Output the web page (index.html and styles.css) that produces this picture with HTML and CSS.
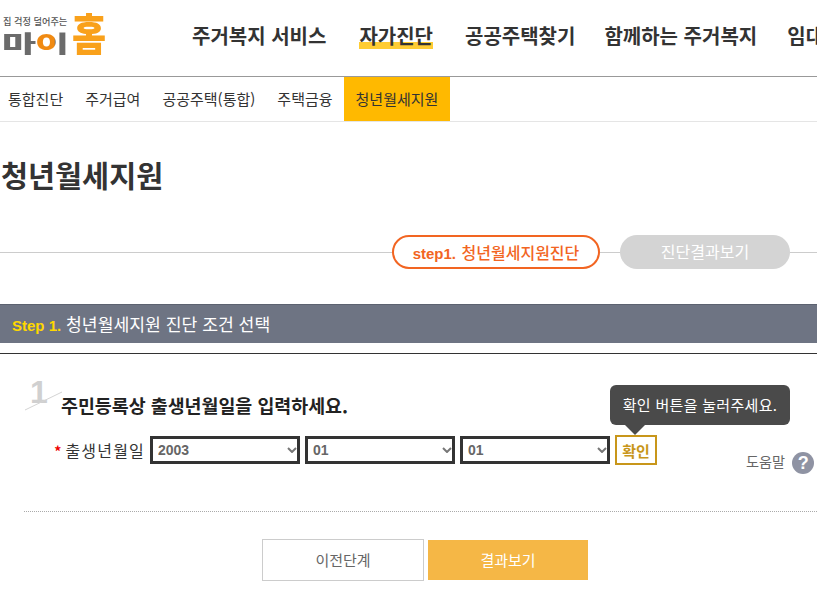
FILE: index.html
```html
<!DOCTYPE html>
<html lang="ko">
<head>
<meta charset="utf-8">
<title>청년월세지원</title>
<link rel="stylesheet" href="styles.css">
</head>
<body>
<header class="top">
  <a class="logo">
    <span class="logo-sub">집 걱정 덜어주는</span>
    <span class="logo-main">마<span class="logo-i">이</span></span>
    <span class="logo-home">홈</span>
  </a>
  <nav class="gnb">
    <a>주거복지 서비스</a>
    <a class="on">자가진단</a>
    <a>공공주택찾기</a>
    <a>함께하는 주거복지</a>
    <a>임대</a>
  </nav>
</header>
<nav class="lnb">
  <a>통합진단</a>
  <a>주거급여</a>
  <a>공공주택(통합)</a>
  <a>주택금융</a>
  <a class="on">청년월세지원</a>
</nav>
<h1 class="title">청년월세지원</h1>
<div class="steps">
  <span class="step current"><b>step1.</b> 청년월세지원진단</span>
  <span class="step next">진단결과보기</span>
</div>
<h2 class="bar"><em>Step 1.</em> 청년월세지원 진단 조건 선택</h2>
<div class="rule"></div>
<section class="form">
  <div class="q">
    <span class="num">1</span>
    <svg class="slash" width="40" height="20" viewBox="0 0 40 20"><line x1="1" y1="19" x2="38" y2="1" stroke="#d4d4d4" stroke-width="1"/></svg>
    <h3>주민등록상 출생년월일을 입력하세요.</h3>
  </div>
  <div class="row">
    <label><i>*</i>출생년월일</label>
    <select><option>2003</option></select>
    <select><option>01</option></select>
    <select><option>01</option></select>
    <div class="confirm-wrap">
      <button class="confirm">확인</button>
      <div class="tip">확인 버튼을 눌러주세요.</div>
    </div>
    <div class="help">도움말 <span class="qmark">?</span></div>
  </div>
  <div class="dots"></div>
  <div class="btns">
    <a class="btn prev">이전단계</a>
    <a class="btn result">결과보기</a>
  </div>
</section>
</body>
</html>
```
FILE: styles.css
```css
* { box-sizing: border-box; }
html, body { margin: 0; padding: 0; height: 606px; overflow: hidden; background: #fff; }
body { width: 817px; font-family: "Noto Sans CJK KR", "Liberation Sans", sans-serif; color: #333; }
h1, h2, h3 { margin: 0; }

.top { height: 77px; border-bottom: 1px solid #999; display: flex; overflow: hidden; }
.logo { width: 192px; flex: none; position: relative; display: block; }
.logo-sub { position: absolute; left: 3px; top: 15px; font-size: 9.2px; line-height: 12px; color: #555; white-space: nowrap; font-weight: 500; }
.logo-main { position: absolute; left: 2px; top: 20px; font-size: 35px; line-height: 44px; font-weight: 900; color: #6b6b6b; letter-spacing: -1px; white-space: nowrap; transform: scale(1.06, 0.66); transform-origin: 0 50%; }
.logo-i { background: linear-gradient(90deg, #f08a12 62%, #6b6b6b 62%); -webkit-background-clip: text; background-clip: text; color: transparent; }
.logo-home { position: absolute; left: 71px; top: 3px; font-size: 39px; line-height: 56px; font-weight: 900; color: #f9a11b; transform: scale(0.95, 1.15); transform-origin: 50% 50%; }
.gnb { display: flex; gap: 31px; padding-top: 21px; white-space: nowrap; font-size: 20px; line-height: 30px; font-weight: 700; color: #333; }
.gnb a { display: block; height: 30px; }
.gnb .on { margin: 0 1px 0 2px; background: linear-gradient(#ffcc33, #ffcc33) 0 21px / 100% 7px no-repeat; }
.gnb .on + a { margin-right: -2px; }
.gnb .on + a + a { margin-right: -1px; }

.lnb { height: 45px; border-bottom: 1px solid #e5e5e5; display: flex; padding-left: 8px; font-size: 15px; line-height: 44px; color: #333; gap: 22px; }
.lnb .on { background: #ffb900; margin-left: -11px; padding: 0 12px; }

.title { font-size: 29.4px; line-height: 40px; font-weight: 700; margin-top: 32px; color: #333; padding-left: 1px; }

.steps { margin-top: 41px; height: 34px; display: flex; gap: 20px; padding-left: 392px; position: relative;
  background: linear-gradient(#ccc, #ccc) 0 17px / 100% 1px no-repeat; }
.step { height: 34px; border-radius: 17px; font-size: 16px; line-height: 30px; text-align: center; }
.step.current { width: 208px; border: 2px solid #f26522; background: #fff; color: #f26522; font-weight: 500; }
.step.current b { font-family: "Liberation Sans", sans-serif; font-weight: 700; font-size: 15px; margin-right: 1px; }
.step.next { width: 170px; background: #d4d4d4; color: #fff; line-height: 33px; }

.bar { margin-top: 35px; height: 39px; background: #6e7483; border-top: 1px solid #5c6270; color: #fff; font-size: 17.2px; font-weight: 400; line-height: 37px; padding-left: 12px; }
.bar em { font-family: "Liberation Sans", sans-serif; font-style: normal; font-weight: 700; font-size: 15px; color: #ffd800; }
.rule { height: 1px; background: #333; margin-top: 10px; }

.form { padding: 0 0 0 24px; }
.q { height: 64px; position: relative; padding: 38px 0 0 38px; }
.q h3 { font-size: 18.4px; line-height: 26px; font-weight: 700; color: #222; margin-left: -1px; }
.num { position: absolute; left: 6px; top: 20px; font-family: "Liberation Sans", sans-serif; font-weight: 700; font-size: 32px; line-height: 36px; color: #d0d0d0; }
.slash { position: absolute; left: 0; top: 37px; }

.row { display: flex; align-items: center; gap: 5px; height: 30px; margin-top: 17px; position: relative; }
.row label { width: 121px; text-align: right; font-size: 16px; letter-spacing: 1.2px; color: #333; white-space: nowrap; }
.row label i { color: #e00; font-style: normal; font-weight: 700; font-size: 14px; letter-spacing: 0; margin-right: 4px; }
.row select { width: 150px; height: 28px; border: 3px solid #333; border-radius: 0; padding: 0 0 0 5px; font-family: "Liberation Sans", sans-serif; font-weight: 700; font-size: 14px; color: #666; appearance: none; -webkit-appearance: none; background: #fff url("data:image/svg+xml,%3Csvg xmlns='http://www.w3.org/2000/svg' width='10' height='6'%3E%3Cpath d='M1 1l4 4 4-4' fill='none' stroke='%23777' stroke-width='2'/%3E%3C/svg%3E") no-repeat right 0 center; }
.confirm-wrap { position: relative; width: 42px; height: 30px; }
.confirm { width: 42px; height: 30px; padding: 0; border: 2px solid #c8961a; background: #fff; color: #c8961a; font-family: inherit; font-size: 15px; font-weight: 700; }
.tip { position: absolute; left: -5px; top: -50px; width: 180px; height: 40px; border-radius: 6px; background: #4a4a4a; color: #fff; font-size: 15px; letter-spacing: 0.3px; line-height: 40px; text-align: center; white-space: nowrap; }
.tip::after { content: ""; position: absolute; left: 15px; top: 40px; border: 10px solid transparent; border-top-color: #4a4a4a; border-bottom: 0; }
.help { position: absolute; left: 722px; top: 14px; display: flex; align-items: flex-start; gap: 7px; font-size: 14.2px; line-height: 24px; color: #666; white-space: nowrap; }
.qmark { width: 22px; height: 22px; margin-top: 3px; border-radius: 50%; background: #8f93a3; color: #fff; font-family: "Liberation Sans", sans-serif; font-weight: 700; font-size: 18px; line-height: 22px; text-align: center; }

.dots { margin-top: 46px; height: 1px; border-top: 1px dotted #aaa; }
.btns { margin-top: 27px; display: flex; justify-content: flex-start; align-items: center; gap: 4px; padding-left: 238px; }
.btn { display: block; text-align: center; font-size: 15px; }
.prev { width: 162px; height: 42px; border: 1px solid #ccc; line-height: 40px; color: #666; }
.result { width: 160px; height: 40px; background: #f5b746; color: #fff; line-height: 40px; }
```
